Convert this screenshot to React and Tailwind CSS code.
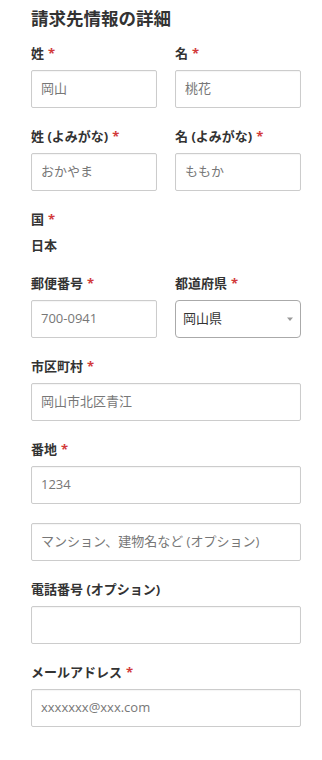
import React from "react";

const Req = () => <span className="text-[#d23a3a] ml-[4px]">*</span>;

const Label = ({ children, req }) => (
  <div className="h-[20px] leading-[20px] text-[13px] font-bold text-[#333] mb-[7px] whitespace-nowrap">
    {children}
    {req && <Req />}
  </div>
);

const Input = ({ value, dark }) => (
  <div
    className={`h-[38px] border border-[#cccccc] rounded-[2px] bg-white flex items-center pl-[9px] text-[13px] whitespace-nowrap shadow-[inset_0_1px_1px_rgba(0,0,0,0.04)] ${
      dark ? "text-[#333]" : "text-[#777]"
    }`}
  >
    {value}
  </div>
);

export default function App() {
  return (
    <div
      className="w-[322px] h-[760px] bg-white pl-[31px] pr-[21px] pt-[8px]"
      style={{ fontFamily: '"Open Sans", "Noto Sans CJK JP", sans-serif' }}
    >
      <h2 className="h-[20px] leading-[20px] text-[17.5px] font-bold text-[#333] mb-[15px]">
        請求先情報の詳細
      </h2>

      <div className="grid grid-cols-2 gap-x-[18px] mb-[18px]">
        <div>
          <Label req>姓</Label>
          <Input value="岡山" />
        </div>
        <div>
          <Label req>名</Label>
          <Input value="桃花" />
        </div>
      </div>

      <div className="grid grid-cols-2 gap-x-[18px] mb-[18px]">
        <div>
          <Label req>姓 (よみがな)</Label>
          <Input value="おかやま" />
        </div>
        <div>
          <Label req>名 (よみがな)</Label>
          <Input value="ももか" />
        </div>
      </div>

      <div className="h-[20px] leading-[20px] text-[13px] font-bold text-[#333] mb-[6px]">
        国<Req />
      </div>
      <div className="h-[20px] leading-[20px] text-[13px] font-bold text-[#333] mb-[18px]">
        日本
      </div>

      <div className="grid grid-cols-2 gap-x-[18px] mb-[18px]">
        <div>
          <Label req>郵便番号</Label>
          <Input value="700-0941" />
        </div>
        <div>
          <Label req>都道府県</Label>
          <div className="h-[38px] border border-[#aaaaaa] rounded-[4px] bg-white flex items-center justify-between pl-[7px] pr-[6px] text-[13px] text-[#333]">
            <span>岡山県</span>
            <svg width="8" height="5" viewBox="0 0 8 5">
              <path d="M1 0.5 L7 0.5 L4 4 Z" fill="#999" />
            </svg>
          </div>
        </div>
      </div>

      <div className="mb-[18px]">
        <Label req>市区町村</Label>
        <Input value="岡山市北区青江" />
      </div>

      <div className="mb-[19px]">
        <Label req>番地</Label>
        <Input value="1234" />
      </div>

      <div className="mb-[18px]">
        <Input value="マンション、建物名など (オプション)" />
      </div>

      <div className="mb-[18px]">
        <Label>電話番号 (オプション)</Label>
        <Input value="" />
      </div>

      <div>
        <Label req>メールアドレス</Label>
        <Input value="xxxxxxx@xxx.com" />
      </div>
    </div>
  );
}
